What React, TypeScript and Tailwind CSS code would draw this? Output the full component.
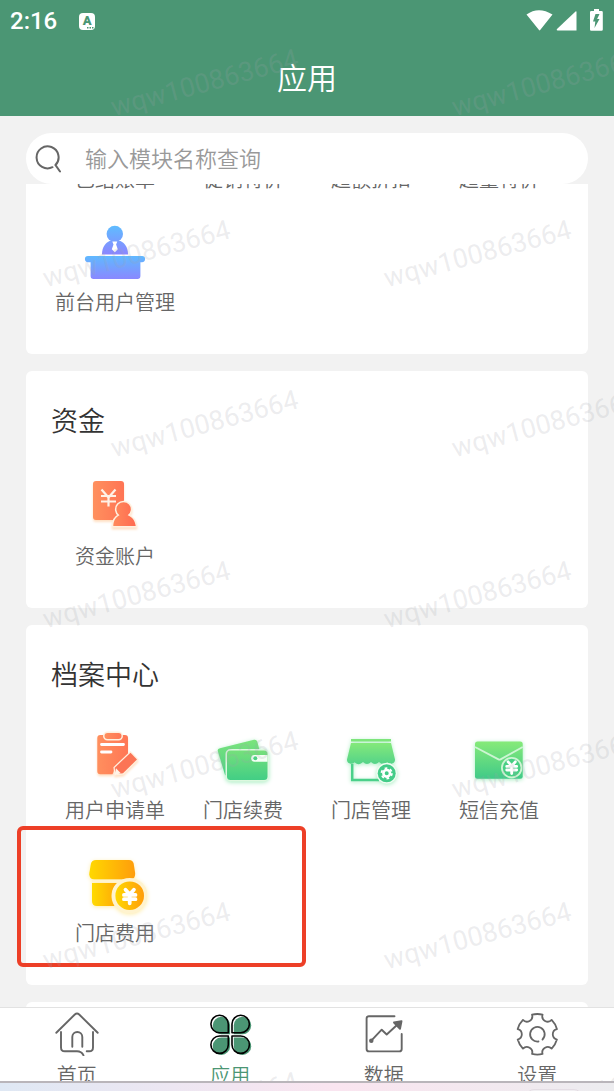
import type { ReactNode } from 'react';

type Entry = { label: string; icon?: ReactNode };

const softOrange = '[filter:drop-shadow(0_2px_1px_#ffe0c4)]';
const softGreen = '[filter:drop-shadow(0_1px_2px_#a6edc0)]';
const softYellow = '[filter:drop-shadow(0_1px_2px_#ffedaa)]';

function Yen({ x, y, s, w, color = '#fff' }: { x: number; y: number; s: number; w: number; color?: string }) {
  return (
    <path
      d="M-4 -6 L0 -1.5 L4 -6 M-5.5 -1 H5.5 M-5.5 3 H5.5 M0 -1 V7"
      transform={`translate(${x} ${y}) scale(${s})`}
      fill="none"
      stroke={color}
      strokeWidth={w}
      strokeLinecap="round"
    />
  );
}

function Gradient({ id, from, to, flat }: { id: string; from: string; to: string; flat?: boolean }) {
  return (
    <linearGradient id={id} x1="0" y1="0" x2={flat ? '1' : '0'} y2={flat ? '0' : '1'}>
      <stop offset="0" stopColor={from} />
      <stop offset="1" stopColor={to} />
    </linearGradient>
  );
}

function ReceptionIcon() {
  return (
    <svg viewBox="0 0 64 64" className="size-16" aria-hidden="true">
      <defs>
        <Gradient id="rc" from="#60b9ff" to="#8a88ff" />
        <linearGradient id="rp" x1="0" y1="6" x2="0" y2="34" gradientUnits="userSpaceOnUse">
          <stop offset="0" stopColor="#5fbcff" />
          <stop offset="1" stopColor="#8b86ff" />
        </linearGradient>
      </defs>
      <path d="M19 34c0-6 3-11 7.500-13h11c4.500 2 7.500 7 7.500 13q0 .6-.6.6H19.600Q19 34.600 19 34z" fill="url(#rp)" />
      <circle cx="31.800" cy="14" r="8.200" fill="url(#rp)" />
      <path d="M29.300 21.500h5l-1.200 3 1.700 4.800-3 3-3-3 1.700-4.800z" fill="#fff" />
      <path d="M5 36h54a3 3 0 0 1 0 6.200h-1.600V56q0 3-3 3H10.600q-3 0-3-3V42.200H5a3 3 0 0 1 0-6.200z" fill="url(#rc)" />
    </svg>
  );
}

function FundsIcon() {
  return (
    <svg viewBox="0 0 64 64" className={`size-16 ${softOrange}`} aria-hidden="true">
      <defs>
        <Gradient id="fd" from="#ff905e" to="#ff7454" flat />
        <Gradient id="fp" from="#ff8a5c" to="#ff6a50" flat />
      </defs>
      <rect x="10" y="7" width="31" height="39" rx="3" fill="url(#fd)" />
      <path d="M18.500 15.500l7 8 7-8M18 22h15M18 27.500h15M25.500 23v9.500" fill="none" stroke="#fff1e6" strokeWidth="2.200" />
      <path
        d="M30.300 52c0-5 2.500-9 6.200-10.700a7.200 7.200 0 1 1 8.200 0c4.500 1.700 7.500 5.700 8 10.700z"
        fill="url(#fp)"
        stroke="#fff0df"
        strokeWidth="3"
        paintOrder="stroke"
      />
    </svg>
  );
}

function ApplicationIcon() {
  return (
    <svg viewBox="0 0 64 64" className={`size-16 ${softOrange}`} aria-hidden="true">
      <defs>
        <Gradient id="ap" from="#ff8f5e" to="#ff7755" flat />
      </defs>
      <path d="M17.300 7H42q3 0 3 3v16L33 38l-3.500 8.300H17.300q-3 0-3-3V10q0-3 3-3z" fill="url(#ap)" />
      <rect x="21.500" y="5" width="17" height="6" rx="3" fill="url(#ap)" stroke="#fff0df" strokeWidth="3" paintOrder="stroke" />
      <path d="M18.500 16.500h22M18.500 24h9.500" stroke="#fff" strokeWidth="2.800" strokeLinecap="round" />
      <path d="M47.500 24.700l6.500 6.800-14 13.700-7.500 1-.8-6.500z" fill="#fb7455" stroke="#fff0df" strokeWidth="2.500" paintOrder="stroke" />
      <path d="M33 40.200l4.800 5-6.300 2z" fill="#fff4e8" />
    </svg>
  );
}

function WalletIcon() {
  return (
    <svg viewBox="0 0 64 64" className={`size-16 ${softGreen}`} aria-hidden="true">
      <defs>
        <Gradient id="wb" from="#7be47c" to="#4bcf86" />
        <Gradient id="wf" from="#76e07b" to="#42ce85" />
      </defs>
      <path d="M9 20.200L43 11.800q2.500-.5 3.200 1.800l3 11-35 23L6.800 23q-.6-2.200 2.200-2.800z" fill="url(#wb)" />
      <rect x="16" y="22.500" width="40.500" height="29.500" rx="3.500" fill="url(#wf)" stroke="#dcf8df" strokeWidth="3" paintOrder="stroke" />
      <path d="M43.500 27h13v6.700h-13a3.300 3.300 0 0 1 0-6.700z" fill="#f5fff6" />
      <circle cx="44.300" cy="30.300" r="2" fill="#4ed083" />
    </svg>
  );
}

function StoreIcon() {
  return (
    <svg viewBox="0 0 64 64" className={`size-16 ${softGreen}`} aria-hidden="true">
      <defs>
        <Gradient id="st" from="#84e97a" to="#54d389" />
      </defs>
      <path d="M12 11h40v2.500H12z" fill="#7ee57b" />
      <path d="M12 15h40l4 16.500a4.200 4.200 0 0 1-7.500 2.700q-4.500 4-8.500-.2-4 4-8 0-4 4-8 0-4 4.200-8.500.2A4.200 4.200 0 0 1 8 31.500z" fill="url(#st)" />
      <path d="M13.200 36v15.900H40" fill="none" stroke="#4bd08a" strokeWidth="2.500" />
      <circle cx="47.700" cy="45.300" r="9" fill="#43cc88" stroke="#effcf1" strokeWidth="3" paintOrder="stroke" />
      <circle cx="47.700" cy="45.300" r="3.300" fill="none" stroke="#fff" strokeWidth="2.600" />
      <circle cx="47.700" cy="45.300" r="5.200" fill="none" stroke="#fff" strokeWidth="1.800" strokeDasharray="2.700 2.745" />
    </svg>
  );
}

function MessageIcon() {
  return (
    <svg viewBox="0 0 64 64" className={`size-16 ${softGreen}`} aria-hidden="true">
      <defs>
        <Gradient id="ms" from="#86ea79" to="#40ca88" />
      </defs>
      <rect x="8" y="13.500" width="47.700" height="37.300" rx="2.500" fill="url(#ms)" />
      <path d="M8 19l23.500 12.400q1 .5 2 0L55.700 19" fill="none" stroke="#cdf5d3" strokeWidth="1.800" />
      <circle cx="44.700" cy="39.700" r="9.800" fill="#48cf84" stroke="#cdf5d3" strokeWidth="1.800" />
      <Yen x={44.7} y={39.3} s={0.9} w={3.2} />
    </svg>
  );
}

function FeeIcon() {
  return (
    <svg viewBox="0 0 64 64" className={`size-16 ${softYellow}`} aria-hidden="true">
      <defs>
        <Gradient id="fe" from="#ffd800" to="#ff9d0c" flat />
        <Gradient id="fb" from="#ffda00" to="#ffa908" flat />
      </defs>
      <path d="M13 9h33q4 0 4.700 3.800l1.400 9q.6 6.500-4.600 6.500H11q-5.300 0-4.600-6.500l1.500-9Q8.700 9 13 9z" fill="url(#fe)" />
      <path d="M9 32h25a18 18 0 0 0-2.500 23H14q-5 0-5-5z" fill="url(#fb)" />
      <path d="M9 30.300h45" stroke="#fff3cf" strokeWidth="2.500" />
      <circle cx="46.700" cy="44.700" r="14.300" fill="url(#fe)" stroke="#fff3cf" strokeWidth="7" paintOrder="stroke" />
      <Yen x={46.7} y={45} s={1.05} w={3.6} />
    </svg>
  );
}

function HomeIcon() {
  return (
    <svg viewBox="0 0 44 44" className="size-11" fill="none" stroke="#666" strokeWidth="1.900" strokeLinecap="round" strokeLinejoin="round" aria-hidden="true">
      <path d="M1.300 20.800L19.800 2.500q2.200-1.900 4.400 0L42.700 20.800" />
      <path d="M6 20v15.500q0 3.800 3.800 3.800H22q4.500 0 6.500 4M38 20v15.500q0 3.800-3.800 3.800h-2.500" />
      <path d="M17.300 34.700V25a5 5 0 0 1 10 0v9.700" />
    </svg>
  );
}

const petals = [
  'M20.300 20.700h-8.600a8.700 8.700 0 1 1 8.600-8.700z',
  'M24 20.700h8.700A8.700 8.700 0 1 0 24 12z',
  'M20.300 24h-8.600a8.700 8.700 0 1 0 8.600 8.700z',
  'M24 24h8.700A8.700 8.700 0 1 1 24 32.700z',
];

function AppsIcon() {
  return (
    <svg viewBox="0 0 44 44" className="size-11" aria-hidden="true">
      {petals.map((d) => (
        <path key={d} d={d} transform="translate(1.800 1.500)" fill="#4b9674" />
      ))}
      {petals.map((d) => (
        <path key={d} d={d} fill="none" stroke="#000" strokeWidth="1.600" strokeLinejoin="round" />
      ))}
    </svg>
  );
}

function DataIcon() {
  return (
    <svg viewBox="0 0 44 44" className="size-11" fill="none" stroke="#666" strokeWidth="1.900" strokeLinecap="round" strokeLinejoin="round" aria-hidden="true">
      <path d="M32.500 4.200H7q-2.400 0-2.400 2.400V37q0 2.400 2.400 2.400h30.300q2.400 0 2.400-2.400V22" />
      <path d="M9.300 28.700l10.400-11 5 4.800L35 13" />
      <circle cx="9.300" cy="28.700" r="1.300" fill="#666" />
      <path d="M39.500 9.300l-7.500 1.200 6 6.300z" fill="#666" />
    </svg>
  );
}

function polar(radius: number, degrees: number) {
  const a = (degrees * Math.PI) / 180;
  return `${(22.3 + radius * Math.cos(a)).toFixed(2)} ${(22.3 + radius * Math.sin(a)).toFixed(2)}`;
}

const gearPath =
  `M${polar(20.3, -15)}` +
  [0, 60, 120, 180, 240, 300]
    .map((a) => ` A5.400 5.400 0 0 0 ${polar(20.3, a + 15)} A21 21 0 0 1 ${polar(20.3, a + 45)}`)
    .join('') +
  'Z';

function SettingsIcon() {
  return (
    <svg viewBox="0 0 44 44" className="size-11" fill="none" stroke="#666" strokeWidth="1.800" strokeLinecap="round" strokeLinejoin="round" aria-hidden="true">
      <path d={gearPath} />
      <path d="M27.500 27.500A7.300 7.300 0 1 0 23.500 29.500" />
    </svg>
  );
}

function StatusBar() {
  return (
    <div className="flex h-[42px] items-center justify-between pl-[10px] pr-[11px] text-white">
      <div className="flex items-center gap-[22px]">
        <span className="font-[Roboto] text-2xl font-medium leading-6">2:16</span>
        <span className="relative flex h-[17px] w-4 items-center justify-center rounded-sm bg-white text-[#4b9674]">
          <span className="font-[Roboto] text-[13px] font-black leading-4">A</span>
          <svg viewBox="0 0 8 2" className="absolute bottom-px right-px h-0.5 w-2" aria-hidden="true">
            <path d="M1 0h1.500v1.500H1zM3.500 0H5v1.500H3.500zM6 0h1.500v1.500H6z" fill="#4b9674" />
          </svg>
        </span>
      </div>
      <svg viewBox="0 0 78 24" className="h-6 w-[78px]" fill="#fff" aria-hidden="true">
        <path d="M1.500 5.500q12-8.500 26 0L15.200 21q-.6.800-1.200 0z" />
        <path d="M51.500 3v18.500H32.500q-1.500-.2-.5-1.500L50.500 2.500q1-.7 1 .5z" />
        <path d="M69 0h5v2h2.500q1.300 0 1.300 1.300V20.500q0 1.300-1.300 1.300H66.300Q65 21.800 65 20.500V3.300Q65 2 66.300 2H69z" />
        <path d="M70.500 5L68 12.500h2.300L69.500 19l5-9h-2.400L74.500 5z" fill="#4b9674" />
      </svg>
    </div>
  );
}

function Tile({ label, icon }: Entry) {
  return (
    <button type="button" className="flex flex-col items-center gap-1.5 whitespace-nowrap">
      {icon}
      <span className="text-xl leading-6 text-[#666]">{label}</span>
    </button>
  );
}

function Section({ title, entries, children }: { title: string; entries: Entry[]; children?: ReactNode }) {
  return (
    <section className="relative rounded-md bg-white px-[25px] pb-10 pt-[35px]">
      <h2 className="text-[27px] leading-7 text-[#333]">{title}</h2>
      <div className="mt-10 grid grid-cols-4 gap-y-[29px]">
        {entries.map((e) => (
          <Tile key={e.label} {...e} />
        ))}
      </div>
      {children}
    </section>
  );
}

function Watermark() {
  return (
    <div className="pointer-events-none absolute inset-x-0 bottom-0 -top-0.5 select-none overflow-hidden" aria-hidden="true">
      {[0, 1, 2, 3, 4, 5, 6].map((row) => (
        <div key={row} className={`flex items-center ${row % 2 ? '-ml-[34px] h-[171px]' : 'ml-[34px] h-[170px]'}`}>
          {[0, 1].map((col) => (
            <span
              key={col}
              className="w-[341px] shrink-0 -rotate-[15deg] text-center font-[Roboto] text-[27px] font-normal leading-8 text-[#a0a3ab]/20"
            >
              wqw100863664
            </span>
          ))}
        </div>
      ))}
    </div>
  );
}

const orders = ['已结账单', '促销特价', '超额折扣', '超量特价'];

const archive: Entry[] = [
  { label: '用户申请单', icon: <ApplicationIcon /> },
  { label: '门店续费', icon: <WalletIcon /> },
  { label: '门店管理', icon: <StoreIcon /> },
  { label: '短信充值', icon: <MessageIcon /> },
  { label: '门店费用', icon: <FeeIcon /> },
];

const tabs = [
  { label: '首页', icon: <HomeIcon />, active: false },
  { label: '应用', icon: <AppsIcon />, active: true },
  { label: '数据', icon: <DataIcon />, active: false },
  { label: '设置', icon: <SettingsIcon />, active: false },
];

export default function App() {
  return (
    <div className="flex h-screen flex-col bg-[#f2f2f2] font-['Noto_Sans_CJK_SC',sans-serif] font-[350]">
      <div className="relative flex min-h-0 flex-1 flex-col">
        <header className="h-[116px] shrink-0 bg-[#4b9674]">
          <StatusBar />
          <h1 className="mt-3.5 text-center text-[30px] leading-10 text-white">应用</h1>
        </header>

        <div className="mx-[26px] mt-[17px] flex h-[51px] shrink-0 items-center rounded-full bg-white pl-2">
          <svg viewBox="0 0 30 30" className="size-[30px]" fill="none" stroke="#666" strokeWidth="2" strokeLinecap="round" aria-hidden="true">
            <path d="M18.500 23.200A11 11 0 1 1 21.500 21L26 27.500" />
          </svg>
          <input
            type="text"
            aria-label="输入模块名称查询"
            placeholder="输入模块名称查询"
            className="ml-[21px] min-w-0 flex-1 bg-transparent pb-1 text-[22px] leading-8 text-[#333] outline-none placeholder:text-[#999]"
          />
        </div>

        <main className="flex min-h-0 flex-1 flex-col gap-[17px] overflow-hidden px-[26px] *:shrink-0">
          <section className="-mt-[17px] rounded-md bg-white px-[25px] pb-10">
            <div className="grid grid-cols-4 gap-y-[29px]">
              {orders.map((label) => (
                <Tile key={label} label={label} />
              ))}
              <Tile label="前台用户管理" icon={<ReceptionIcon />} />
            </div>
          </section>
          <Section title="资金" entries={[{ label: '资金账户', icon: <FundsIcon /> }]} />
          <Section title="档案中心" entries={archive}>
            <div className="pointer-events-none absolute -left-[9px] top-[201px] h-[141px] w-[289px] rounded-md border-4 border-[#ed3f27]" />
          </Section>
          <div className="h-6 rounded-md bg-white" />
        </main>

        <nav className="grid h-[74px] shrink-0 grid-cols-4 overflow-hidden border-t border-[#e2e2e2] bg-white pt-1">
          {tabs.map((t) => (
            <a
              key={t.label}
              href="#"
              aria-current={t.active ? 'page' : undefined}
              className={`flex flex-col items-center gap-[7px] text-xl leading-6 ${t.active ? 'text-[#4b9674]' : 'text-[#666]'}`}
            >
              {t.icon}
              <span>{t.label}</span>
            </a>
          ))}
        </nav>
        <Watermark />
      </div>

      <footer className="flex h-[10px] shrink-0 justify-end overflow-hidden border-t-2 border-[#b9b5ba] bg-linear-to-r from-[#dfe8f4] via-[#fae5f0] via-55% to-[#ececef] pr-8 pt-1.5">
        <div className="h-6 w-14 rounded-lg border border-[#e4dde4] bg-[#f1eff2]" />
      </footer>
    </div>
  );
}
